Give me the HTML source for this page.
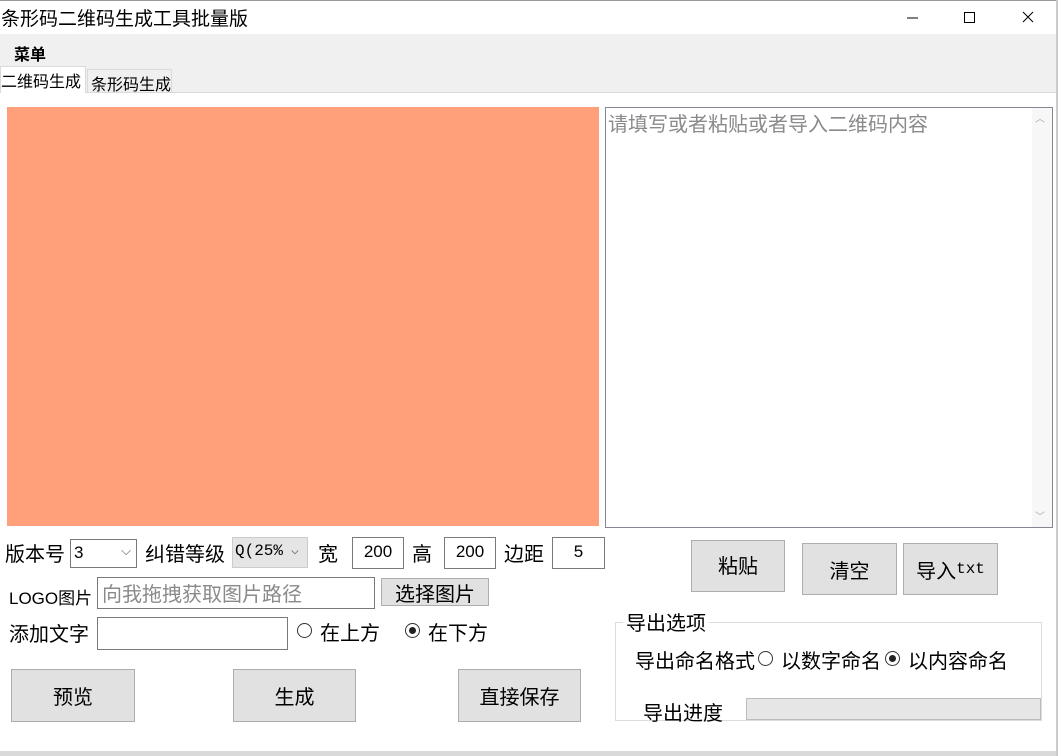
<!DOCTYPE html>
<html><head><meta charset="utf-8"><style>
body{margin:0;width:1058px;height:756px;position:relative;background:#fff;font-family:"Liberation Sans","Noto Sans CJK SC",sans-serif;overflow:hidden;color:#000}
.a{position:absolute;white-space:nowrap}
.btn{position:absolute;background:#e1e1e1;border:1px solid #adadad;box-sizing:border-box;display:flex;align-items:center;justify-content:center;font-size:20px}
.inp{position:absolute;background:#fff;border:1px solid #7a7a7a;box-sizing:border-box;font-size:17px}
.t{font-size:20px}
.radio{position:absolute;width:15px;height:15px;border:1px solid #333;border-radius:50%;box-sizing:border-box;background:#fff}
.radio.on::after{content:"";position:absolute;left:3px;top:3px;width:7px;height:7px;border-radius:50%;background:#222}
</style></head><body>
<div class="a" style="left:0;top:0;width:1058px;height:1px;background:#999"></div>
<div class="a" style="left:1px;top:4px;font-size:19px">条形码二维码生成工具批量版</div>
<svg class="a" style="left:900px;top:8px" width="150" height="20"><line x1="7" y1="10" x2="18" y2="10" stroke="#000"/><rect x="64.5" y="4.5" width="10" height="10" fill="none" stroke="#000"/><path d="M123 4L133 14M133 4L123 14" stroke="#000"/></svg>
<div class="a" style="left:0;top:34px;width:1058px;height:33px;background:#f0f0f0"></div>
<div class="a" style="left:14px;top:41px;font-size:16px;font-weight:bold">菜单</div>
<div class="a" style="left:0;top:67px;width:1058px;height:25px;background:#f0f0f0;border-bottom:1px solid #dadada"></div>
<div class="a" style="left:0;top:66px;width:86px;height:27px;background:#fff;border:1px solid #dadada;border-bottom:none;box-sizing:border-box"></div>
<div class="a" style="left:1px;top:68px;font-size:16px">二维码生成</div>
<div class="a" style="left:87px;top:69px;width:85px;height:24px;background:#f0f0f0;border:1px solid #dadada;box-sizing:border-box"></div>
<div class="a" style="left:91px;top:71px;font-size:16px">条形码生成</div>
<div class="a" style="left:7px;top:107px;width:592px;height:419px;background:#ffa07a"></div>
<div class="a" style="left:605px;top:107px;width:448px;height:421px;border:1px solid #828790;box-sizing:border-box;background:#fff"></div>
<div class="a" style="left:608px;top:108px;font-size:20px;color:#8a8a8a">请填写或者粘贴或者导入二维码内容</div>
<div class="a" style="left:1032px;top:108px;width:20px;height:419px;background:#f7f7f7"></div>
<div class="a" style="left:1035px;top:110px;font-size:10px;color:#aaa">︿</div>
<div class="a" style="left:1035px;top:508px;font-size:10px;color:#aaa">﹀</div>

<div class="a t" style="left:5px;top:538px">版本号</div>
<div class="inp" style="left:70px;top:539px;width:67px;height:29px;padding:3px 3px">3<span style="position:absolute;right:5px;top:3px;font-size:13px;color:#555">⌵</span></div>
<div class="a t" style="left:145px;top:538px">纠错等级</div>
<div class="inp" style="left:232px;top:537px;width:76px;height:31px;background:#e5e5e5;border-color:#ccc;padding:4px 2px;font-size:16px;font-family:'Liberation Mono',monospace;overflow:hidden">Q(25%<span style="position:absolute;right:0;top:0;width:20px;height:29px;font-size:13px;color:#555;background:#e5e5e5;padding:5px 4px;box-sizing:border-box">⌵</span></div>
<div class="a t" style="left:318px;top:538px">宽</div>
<div class="inp" style="left:352px;top:537px;width:52px;height:32px;text-align:center;padding-top:4px">200</div>
<div class="a t" style="left:412px;top:538px">高</div>
<div class="inp" style="left:444px;top:537px;width:52px;height:32px;text-align:center;padding-top:4px">200</div>
<div class="a t" style="left:504px;top:538px">边距</div>
<div class="inp" style="left:552px;top:537px;width:53px;height:32px;text-align:center;padding-top:4px">5</div>

<div class="a" style="left:9px;top:584px;font-size:17px">LOGO图片</div>
<div class="inp" style="left:97px;top:577px;width:278px;height:32px;color:#8a8a8a;font-size:20px;padding:0 4px">向我拖拽获取图片路径</div>
<div class="btn" style="left:381px;top:578px;width:108px;height:28px">选择图片</div>

<div class="a t" style="left:9px;top:618px">添加文字</div>
<div class="inp" style="left:97px;top:617px;width:191px;height:33px"></div>
<div class="radio" style="left:297px;top:623px"></div>
<div class="a t" style="left:320px;top:617px">在上方</div>
<div class="radio on" style="left:405px;top:623px"></div>
<div class="a t" style="left:428px;top:617px">在下方</div>

<div class="btn" style="left:11px;top:669px;width:124px;height:53px">预览</div>
<div class="btn" style="left:233px;top:669px;width:123px;height:53px">生成</div>
<div class="btn" style="left:458px;top:669px;width:123px;height:53px">直接保存</div>

<div class="btn" style="left:691px;top:540px;width:94px;height:52px;padding-bottom:4px">粘贴</div>
<div class="btn" style="left:802px;top:543px;width:95px;height:52px">清空</div>
<div class="btn" style="left:903px;top:543px;width:95px;height:52px">导入<span style="font-family:'Liberation Mono',monospace;font-size:16px">txt</span></div>

<div class="a" style="left:615px;top:622px;width:427px;height:99px;border:1px solid #dcdcdc;box-sizing:border-box"></div>
<div class="a t" style="left:623px;top:607px;background:#fff;padding:0 3px">导出选项</div>
<div class="a t" style="left:635px;top:645px">导出命名格式</div>
<div class="radio" style="left:758px;top:651px"></div>
<div class="a t" style="left:781px;top:645px">以数字命名</div>
<div class="radio on" style="left:885px;top:651px"></div>
<div class="a t" style="left:908px;top:645px">以内容命名</div>
<div class="a t" style="left:643px;top:697px">导出进度</div>
<div class="a" style="left:746px;top:698px;width:295px;height:22px;background:#e6e6e6;border:1px solid #bcbcbc;box-sizing:border-box"></div>

<div class="a" style="left:0;top:751px;width:1058px;height:5px;background:#d9d9d9"></div>
<div class="a" style="left:1056px;top:0;width:2px;height:756px;background:#ccc"></div>
</body></html>
